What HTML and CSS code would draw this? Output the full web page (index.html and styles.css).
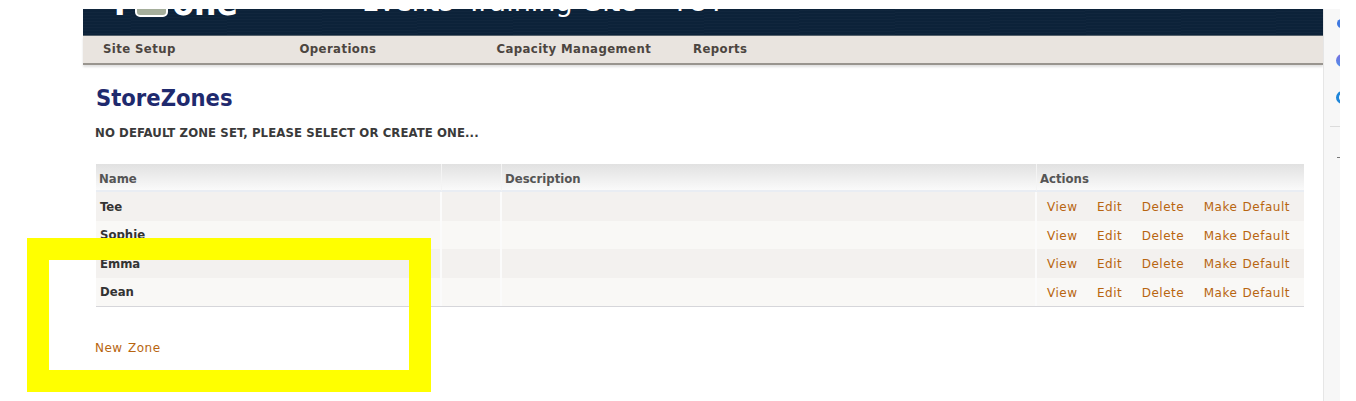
FILE: index.html
```html
<!DOCTYPE html>
<html lang="en">
<head>
<meta charset="utf-8">
<title>StoreZones</title>
<link rel="stylesheet" href="styles.css">
</head>
<body>
<div class="shell">
  <div class="page">
    <header class="banner">
      <div class="logo">T<span class="logo-box"></span>one</div>
      <div class="site-title">Events Training Site - TUT</div>
    </header>
    <nav class="nav">
      <a class="nav-a">Site Setup</a>
      <a class="nav-b">Operations</a>
      <a class="nav-c">Capacity Management</a>
      <a>Reports</a>
    </nav>
    <main class="content">
      <h1 class="title">StoreZones</h1>
      <p class="notice">NO DEFAULT ZONE SET, PLEASE SELECT OR CREATE ONE...</p>
      <table class="zones">
        <colgroup><col class="c-name"><col class="c-blank"><col class="c-desc"><col class="c-act"></colgroup>
        <thead>
          <tr><th>Name</th><th></th><th>Description</th><th>Actions</th></tr>
        </thead>
        <tbody>
          <tr><td class="name">Tee</td><td></td><td></td><td><div class="actions"><a>View</a><a>Edit</a><a>Delete</a><a>Make Default</a></div></td></tr>
          <tr><td class="name">Sophie</td><td></td><td></td><td><div class="actions"><a>View</a><a>Edit</a><a>Delete</a><a>Make Default</a></div></td></tr>
          <tr><td class="name">Emma</td><td></td><td></td><td><div class="actions"><a>View</a><a>Edit</a><a>Delete</a><a>Make Default</a></div></td></tr>
          <tr><td class="name">Dean</td><td></td><td></td><td><div class="actions"><a>View</a><a>Edit</a><a>Delete</a><a>Make Default</a></div></td></tr>
        </tbody>
      </table>
      <a class="new-zone">New Zone</a>
    </main>
  </div>
  <aside class="rail">
    <span class="dot dot-blue"></span>
    <span class="dot dot-purple"></span>
    <span class="dot dot-ring"></span>
    <span class="rule"></span>
    <span class="dash"></span>
  </aside>
</div>
<div class="highlight"></div>
</body>
</html>
```

FILE: styles.css
```css
* { box-sizing: border-box; }
html, body { margin: 0; height: 401px; overflow: hidden; background: #fff; }
body { font-family: "DejaVu Sans", Verdana, sans-serif; font-size: 12px; color: #333; }

.shell { display: flex; padding: 9px 16px 0 83px; height: 401px; }
.page { width: 1240px; flex: none; }

.banner {
  height: 27px;
  overflow: hidden;
  position: relative;
  display: flex;
  align-items: flex-end;
  border-bottom: 1px solid #55616b;
  background-color: #0c2239;
  background-image: repeating-linear-gradient(179.4deg, rgba(255,255,255,.02) 0 1px, transparent 1px 3px);
}
.logo {
  margin: 0 0 14px 26px;
  width: 253px;
  flex: none;
  color: #fff;
  font-size: 35px;
  font-weight: 700;
  font-stretch: condensed;
  line-height: 36px;
  display: flex;
  align-items: flex-end;
  height: 36px;
}
.logo-box {
  width: 33px;
  height: 30px;
  margin: 0 4px 4px 5px;
  background: #a5ae9b;
  border: 2px solid #fff;
  border-radius: 5px;
}
.site-title {
  margin-bottom: 18px;
  color: #fff;
  font-size: 27px;
  line-height: 30px;
  word-spacing: 4px;
  white-space: nowrap;
}

.nav {
  height: 29px;
  display: flex;
  align-items: center;
  padding: 0 0 2px 20px;
  background: #e9e4df;
  border-bottom: 2px solid #99958f;
  box-shadow: 0 2px 2px rgba(0,0,0,.12);
  font-weight: 700;
  font-stretch: condensed;
  color: #4c4540;
  font-size: 13px;
  letter-spacing: .4px;
}
.nav a { white-space: nowrap; }
.nav-a { width: 196.5px; }
.nav-b { width: 197px; }
.nav-c { width: 196.5px; }

.content { padding: 0 19px 0 13px; }
.title {
  margin: 18px 0 0;
  font-size: 23.5px;
  line-height: 30px;
  font-weight: 700;
  font-stretch: condensed;
  color: #1f2a6e;
}
.notice {
  margin: 12px 0 0 -1px;
  font-size: 13px;
  line-height: 16px;
  font-weight: 700;
  font-stretch: condensed;
  letter-spacing: .1px;
  color: #3a3a3a;
}

.zones {
  margin-top: 23px;
  width: 1208px;
  table-layout: fixed;
  border-collapse: separate;
  border-spacing: 0;
  border-bottom: 1px solid #d6d6da;
}
.c-name { width: 346px; }
.c-blank { width: 60px; }
.c-desc { width: 535px; }
.c-act { width: 267px; }
.zones th {
  height: 28px;
  padding: 3px 0 0 3px;
  text-align: left;
  font-size: 13px;
  font-weight: 700;
  font-stretch: condensed;
  color: #555;
  background: linear-gradient(#e1e1e1, #fafafa);
  border-bottom: 2px solid #e9edf3;
  border-right: 1px solid #f4f4f4;
}
.zones td {
  height: 28.5px;
  padding: 2px 0 0 4px;
  background: #f3f1ef;
  border-right: 2px solid #fbfbfb;
}
.zones tr:nth-child(even) td { background: #f9f8f6; }
.zones th:last-child, .zones td:last-child { border-right: 0; }
.zones .name { padding-top: 0; font-weight: 700; font-stretch: condensed; font-size: 13px; color: #333; }
.actions { display: flex; gap: 19.5px; padding-left: 6px; }
.actions a, .new-zone { color: #b8650f; white-space: nowrap; letter-spacing: .5px; word-spacing: 1px; }
.new-zone { display: block; margin: 33px 0 0 -1px; line-height: 16px; }

.rail {
  width: 17px;
  flex: none;
  height: 392px;
  overflow: hidden;
  background: #f7f7f7;
  border-left: 1px solid #e6e6e6;
  display: flex;
  flex-direction: column;
  padding-top: 10px;
}
.dot { display: block; flex: none; border-radius: 50%; margin-left: 13px; }
.dot-blue { width: 9px; height: 9px; background: #3f78e0; }
.dot-purple { width: 13px; height: 13px; margin-top: 26px; margin-left: 12px; background: linear-gradient(#7a6fe0, #4d8fe8); }
.dot-ring { width: 13px; height: 13px; margin-top: 24px; margin-left: 12px; border: 3px solid #1f86d9; background: #fff; }
.rule { display: block; flex: none; height: 1px; margin: 22px 0 0 6px; background: #dcdcdc; }
.dash { display: block; flex: none; width: 4px; height: 1px; margin: 30px 0 0 13px; background: #777; }

.highlight {
  position: absolute;
  left: 27px;
  top: 238px;
  width: 404px;
  height: 154px;
  border: 22px solid #ff0;
}
```
